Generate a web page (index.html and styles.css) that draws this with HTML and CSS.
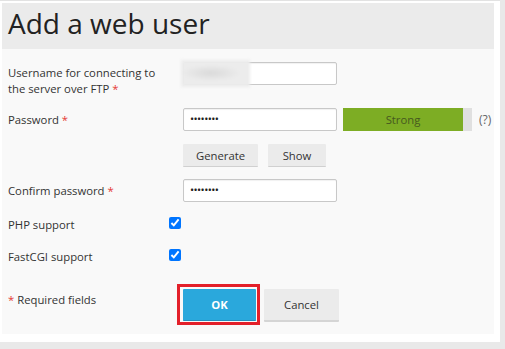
FILE: index.html
```html
<!DOCTYPE html>
<html lang="en">
<head>
  <meta charset="UTF-8">
  <title>Add a web user</title>
  <link rel="stylesheet" href="styles.css">
</head>
<body>

  <div class="card">
    <div class="header">
      <h1>Add a web user</h1>
    </div>

    <div class="panel">
      <div class="row row-user">
        <div class="label">Username for connecting to<br>the server over FTP <span class="req">*</span></div>
        <div class="field">
          <div class="input user-input"><span class="blurred"></span></div>
        </div>
      </div>

      <div class="row row-pass">
        <div class="label label-mid">Password <span class="req">*</span></div>
        <div class="field">
          <div class="input">&bull;&bull;&bull;&bull;&bull;&bull;&bull;&bull;</div>
          <div class="strength"><div class="strength-fill">Strong</div></div>
          <span class="hint">(?)</span>
        </div>
      </div>

      <div class="row row-gen">
        <div class="label"></div>
        <div class="field">
          <button class="btn btn-gen">Generate</button>
          <button class="btn btn-show">Show</button>
        </div>
      </div>

      <div class="row row-confirm">
        <div class="label label-mid">Confirm password <span class="req">*</span></div>
        <div class="field">
          <div class="input">&bull;&bull;&bull;&bull;&bull;&bull;&bull;&bull;</div>
        </div>
      </div>

      <div class="row row-php">
        <div class="label">PHP support</div>
        <div class="field"><input type="checkbox" checked></div>
      </div>

      <div class="row row-cgi">
        <div class="label">FastCGI support</div>
        <div class="field"><input type="checkbox" checked></div>
      </div>

      <div class="row row-foot">
        <div class="label label-foot"><span class="req">*</span> Required fields</div>
        <div class="field">
          <div class="highlight"><button class="btn btn-ok">OK</button></div>
          <button class="btn btn-cancel">Cancel</button>
        </div>
      </div>
    </div>
  </div>

</body>
</html>
```

FILE: styles.css
```css
body {
  margin: 0;
  background: #e9e9e9;
  font-family: "Open Sans", sans-serif;
  font-size: 11.3px;
  color: #333;
}
.card {
  width: 492px;
  height: 331px;
  padding: 2px 6px 8px 2px;
  background: #fff;
  border-top: 1px solid #e2e2e2;
}
.header {
  height: 46px;
  background: #ebebeb;
  padding-left: 6px;
}
h1 {
  margin: 0;
  font-size: 28px;
  font-weight: 400;
  line-height: 41px;
  color: #222;
}
.panel {
  height: 285px;
  background: #f9f9f9;
  padding-left: 6px;
  overflow: hidden;
}
.row {
  display: flex;
  align-items: flex-start;
}
.label {
  width: 175px;
  flex: none;
  line-height: 16px;
}
.label-mid {
  line-height: 23px;
}
.req {
  color: #e53935;
}
.field {
  display: flex;
  align-items: center;
}
.row-user { margin-top: 13px; height: 35px; }
.row-user .label { padding-top: 3px; }
.row-pass { margin-top: 11px; }
.row-gen { margin-top: 13px; }
.row-confirm { margin-top: 12px; }
.row-php { margin-top: 15px; height: 16px; }
.row-cgi { margin-top: 16px; height: 16px; }
.row-foot { margin-top: 20px; }
.label-foot { padding-top: 7px; }

.input {
  box-sizing: border-box;
  width: 154px;
  height: 23px;
  border: 1px solid #c8c8c8;
  border-radius: 2px;
  background: #fff;
  box-shadow: inset 0 1px 1px rgba(0,0,0,0.06);
  padding-left: 6px;
  font-size: 11px;
  line-height: 20px;
  letter-spacing: -0.6px;
  color: #222;
}
.user-input {
  position: relative;
  padding: 0;
}
.blurred {
  display: block;
  width: 69px;
  height: 27px;
  margin: -3px 0 0 -3px;
  background: radial-gradient(ellipse 30px 8px at 30px 13px, #d9d9d9, #ececec);
  filter: blur(1.5px);
}
.strength {
  width: 129px;
  height: 23px;
  margin-left: 6px;
  background: #e0e0e0;
}
.strength-fill {
  width: 120px;
  height: 23px;
  background: #7dad24;
  color: #46591f;
  text-align: center;
  line-height: 23px;
}
.hint {
  margin-left: 7px;
  color: #666;
  font-size: 12px;
}
.btn {
  font-family: "Open Sans", sans-serif;
  font-size: 11.3px;
  color: #333;
  background: #ebebeb;
  border: none;
  border-bottom: 1px solid #d0d0d0;
  border-radius: 1px;
  padding: 0;
  height: 23px;
  cursor: pointer;
}
.btn-gen { width: 75px; }
.btn-show { width: 58px; margin-left: 10px; }
input[type="checkbox"] {
  margin: 0 0 0 -14px;
  width: 12px;
  height: 12px;
}
.highlight {
  margin-left: -6px;
  margin-top: -1px;
  padding: 2px 1px 1px 3px;
  border: 3px solid #e3202a;
}
.btn-ok {
  display: block;
  width: 73px;
  height: 32px;
  background: #2aa8dc;
  color: #fff;
  font-weight: 700;
  border-bottom: 1px solid #2490bd;
}
.btn-cancel {
  width: 75px;
  height: 33px;
  margin-left: 4px;
  border-bottom: 2px solid #d5d5d5;
}
```
